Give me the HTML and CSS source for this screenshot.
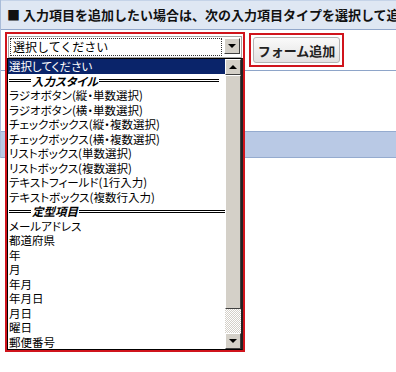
FILE: index.html
```html
<!DOCTYPE html>
<html lang="ja">
  <head>
    <meta charset="UTF-8" />
    <meta name="viewport" content="width=device-width, initial-scale=1.0" />
    <title>フォーム追加</title>
    <link rel="stylesheet" href="styles.css">
  </head>
  <body>
    <div class="table">
      <div class="header">■ 入力項目を追加したい場合は、次の入力項目タイプを選択して追加する</div>
      <div class="row">
        <div class="spacer"></div>
        <div class="btn-frame">
          <button class="btn">フォーム追加</button>
        </div>
      </div>
      <div class="row-empty"></div>
      <div class="row-band"></div>
    </div>

    <div class="picker">
      <div class="select">
        <div class="select-text"><span>選択してください</span></div>
        <div class="sb-btn arrow-down"></div>
      </div>
      <div class="list">
        <div class="options">
          <div class="opt selected">選択してください</div>
          <div class="opt group"><span class="rule short"></span><span class="group-name">入力スタイル</span><span class="rule"></span></div>
          <div class="opt">ラジオボタン(縦・単数選択)</div>
          <div class="opt">ラジオボタン(横・単数選択)</div>
          <div class="opt">チェックボックス(縦・複数選択)</div>
          <div class="opt">チェックボックス(横・複数選択)</div>
          <div class="opt">リストボックス(単数選択)</div>
          <div class="opt">リストボックス(複数選択)</div>
          <div class="opt">テキストフィールド(1行入力)</div>
          <div class="opt">テキストボックス(複数行入力)</div>
          <div class="opt group"><span class="rule short"></span><span class="group-name">定型項目</span><span class="rule long"></span></div>
          <div class="opt">メールアドレス</div>
          <div class="opt">都道府県</div>
          <div class="opt">年</div>
          <div class="opt">月</div>
          <div class="opt">年月</div>
          <div class="opt">年月日</div>
          <div class="opt">月日</div>
          <div class="opt">曜日</div>
          <div class="opt">郵便番号</div>
        </div>
        <div class="scrollbar">
          <div class="sb-btn arrow-up"></div>
          <div class="sb-thumb"></div>
          <div class="sb-track"></div>
          <div class="sb-btn arrow-down"></div>
        </div>
      </div>
    </div>
  </body>
</html>
```

FILE: styles.css
```css
body {
  margin: 0;
  font-family: "Noto Sans CJK JP", "Noto Sans", sans-serif;
  background: #fff;
  overflow: hidden;
}
.table {
  border-left: 1px solid #a9bcd9;
  width: 395px;
}
.header {
  height: 28px;
  line-height: 28px;
  padding-left: 6px;
  background: #dfe7f3;
  border-top: 1px solid #c5d3e8;
  border-bottom: 1px solid #91a7cb;
  font-size: 13px;
  font-weight: bold;
  color: #111;
  white-space: nowrap;
  overflow: hidden;
}
.row {
  display: flex;
  height: 40px;
  border-bottom: 1px solid #8ea5c9;
}
.spacer {
  width: 248px;
}
.btn-frame {
  margin-top: 3px;
  width: 91px;
  height: 30px;
  border: 2px solid #d0141c;
  display: flex;
  align-items: center;
  justify-content: center;
}
.btn {
  width: 87px;
  height: 26px;
  padding: 0;
  border: 1px solid #b4b4b4;
  border-radius: 3px;
  background: linear-gradient(#fafafa, #e2e2e2);
  font-family: "Noto Sans CJK JP", sans-serif;
  font-size: 13px;
  font-weight: bold;
  color: #222;
}
.row-empty {
  height: 60px;
}
.row-band {
  height: 25px;
  background: #b9c9e5;
  border-top: 1px solid #95abcf;
  border-bottom: 1px solid #95abcf;
}

/* open dropdown overlay */
.picker {
  position: absolute;
  left: 5px;
  top: 32px;
  width: 236px;
  height: 316px;
  border: 2px solid #d0141c;
  font-size: 12px;
}
.select {
  display: flex;
  height: 18px;
  margin: 2px 1px 0 1px;
  padding: 1px;
  border: 1px solid #a5a5a5;
  background: #fff;
}
.select-text {
  flex: 1;
  margin-right: 2px;
  border: 1px dotted #333;
  line-height: 16px;
  padding-left: 2px;
  color: #000;
}
.list {
  display: flex;
  height: 290px;
  margin: 0;
  border: 1px solid #000;
  border-right: 2px solid #222;
  background: #fff;
}
.options {
  flex: 1;
  overflow: hidden;
}
.opt {
  height: 14.5px;
  line-height: 14.5px;
  padding-left: 1px;
  font-size: 11.5px;
  color: #000;
  white-space: nowrap;
  font-feature-settings: "palt";
}
.opt.selected {
  background: #0a246a;
  color: #fff;
}
.opt.group {
  display: flex;
  align-items: center;
}
.group-name {
  line-height: 14.5px;
  font-weight: bold;
  font-style: italic;
  padding: 0 1px;
}
.rule {
  flex: 1;
  height: 0;
  border-top: 3px double #000;
  margin-right: 6px;
}
.rule.short {
  flex: none;
  width: 22px;
  margin-right: 0;
}
.rule.long {
  margin-right: 0;
}
.scrollbar {
  width: 16px;
  display: flex;
  flex-direction: column;
  background: #d4d0c8;
}
.sb-btn {
  width: 16px;
  height: 16px;
  box-sizing: border-box;
  background: #d4d0c8;
  border: 1px solid;
  border-color: #fff #404040 #404040 #fff;
  display: flex;
  align-items: center;
  justify-content: center;
}
.arrow-down::after,
.arrow-up::after {
  content: "";
  width: 0;
  height: 0;
  border-left: 4px solid transparent;
  border-right: 4px solid transparent;
}
.arrow-down::after {
  border-top: 4px solid #000;
}
.arrow-up::after {
  border-bottom: 4px solid #000;
}
.sb-thumb {
  height: 234px;
  box-sizing: border-box;
  background: #d4d0c8;
  border: 1px solid;
  border-color: #fff #404040 #404040 #fff;
}
.sb-track {
  flex: 1;
  background-color: #fff;
  background-image: repeating-conic-gradient(#d4d0c8 0 25%, #fff 0 50%);
  background-size: 2px 2px;
}
```
